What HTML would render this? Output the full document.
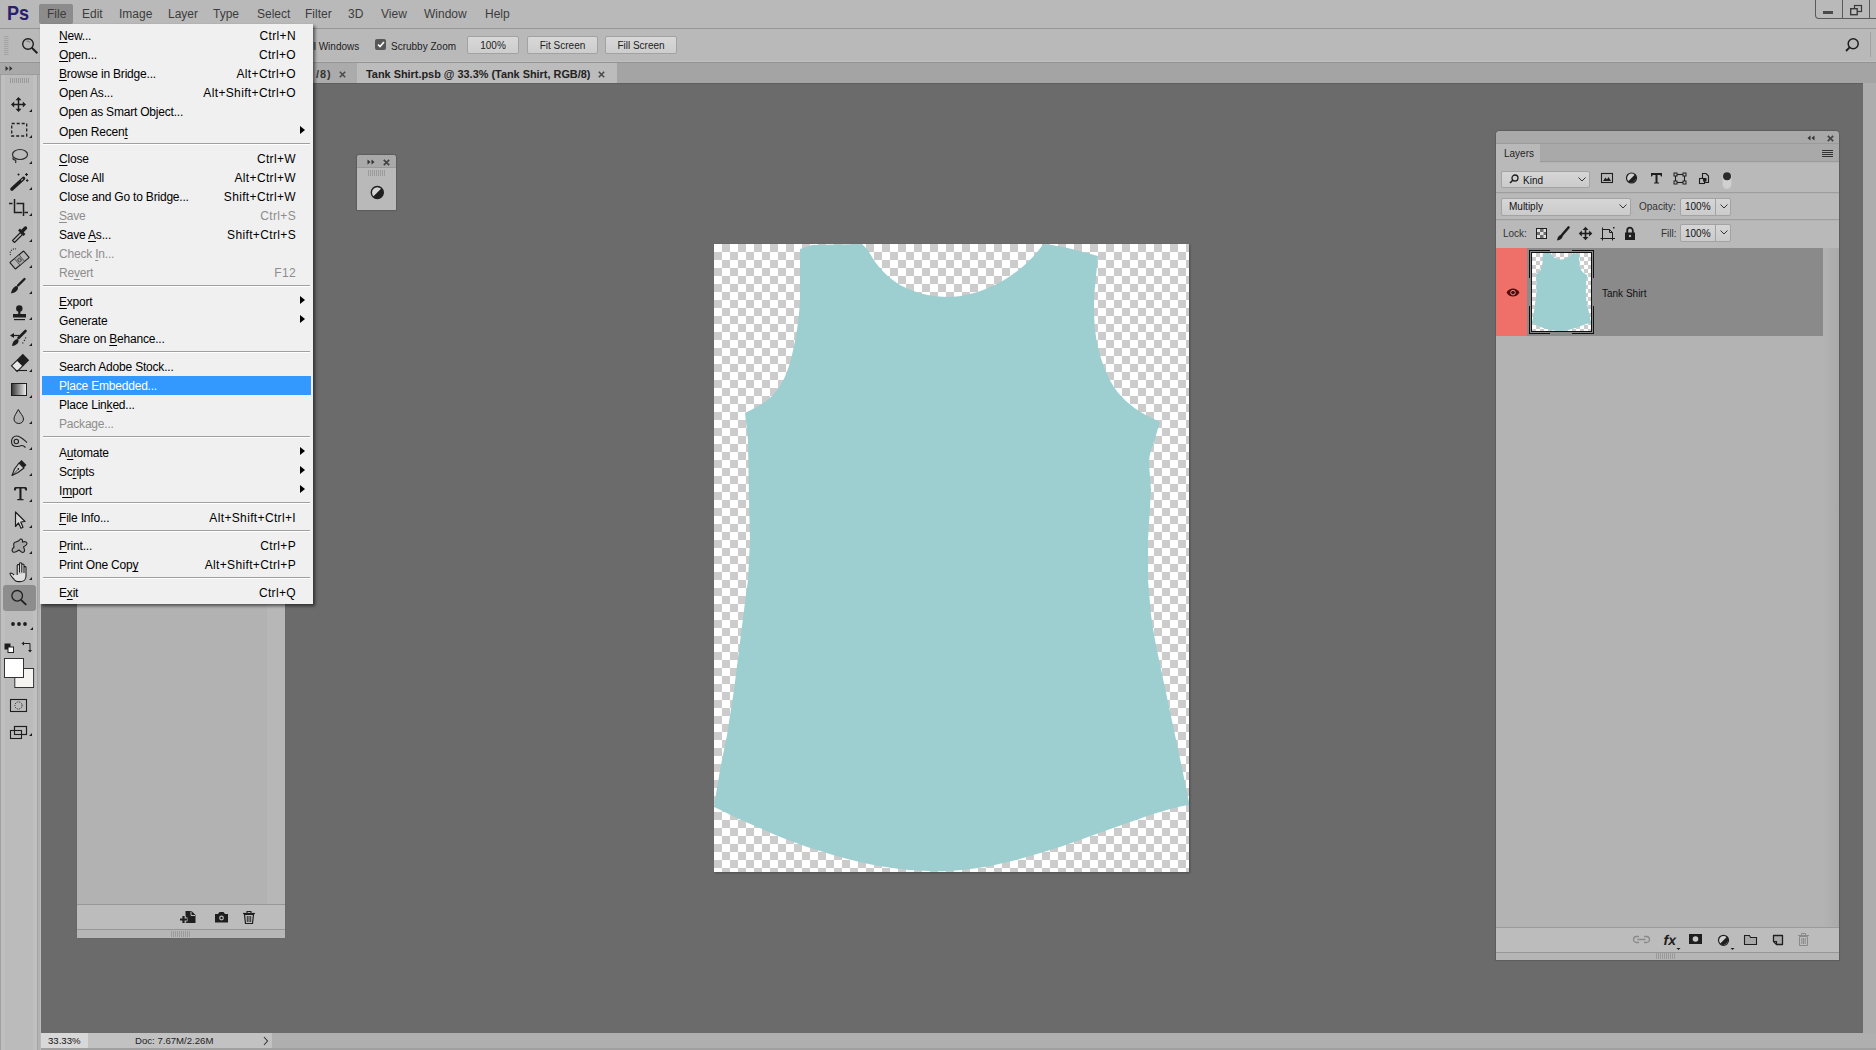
<!DOCTYPE html>
<html><head><meta charset="utf-8">
<style>
*{box-sizing:border-box;margin:0;padding:0}
html,body{width:1876px;height:1050px;overflow:hidden}
body{position:relative;background:#6b6b6b;font-family:"Liberation Sans",sans-serif;color:#1e1e1e}
.a{position:absolute}
.t{position:absolute;white-space:pre;line-height:1}
svg{position:absolute;overflow:visible}
/* menu bar */
#menubar{left:0;top:0;width:1876px;height:29px;background:#b9b9b9;border-bottom:1px solid #969696}
#menubar .m{position:absolute;top:7px;font-size:12px;color:#3c3c3c;white-space:pre;line-height:14px}
#options{left:0;top:29px;width:1876px;height:33px;background:#b9b9b9;border-bottom:1px solid #bfbfbf}
#tabs{left:40px;top:62px;width:1836px;height:21px;background:#a4a4a4;border-top:1px solid #949494}
#toolbar{left:0;top:62px;width:41px;height:988px;background:#bbbbbb}
#rstrip{left:1863px;top:83px;width:13px;height:950px;background:#adadad}
#status{left:41px;top:1033px;width:1836px;height:17px;background:#afafaf}
.btn{position:absolute;height:18px;background:linear-gradient(#d8d8d8,#cdcdcd);border:1px solid #a2a2a2;border-radius:2px;font-size:10px;color:#222;text-align:center;line-height:17px}
/* document */
#doc{left:714px;top:244px;width:475px;height:628px;
 background:conic-gradient(#cccccc 90deg,#ffffff 90deg 180deg,#cccccc 180deg 270deg,#ffffff 270deg) 0 0/16px 16px;
 box-shadow:1px 1px 2px rgba(0,0,0,0.3)}
/* file menu */
#fmenu{left:40px;top:24px;width:273px;height:580px;background:#f0f0f0;box-shadow:2px 2px 3px rgba(0,0,0,0.55)}
#fmenu .it{position:absolute;left:2px;width:269px;height:19px;font-size:12px;line-height:21px;color:#000}
#fmenu .it .l{position:absolute;left:17px;top:0;white-space:pre;letter-spacing:-0.2px}
#fmenu .it .r{position:absolute;right:15px;top:0;white-space:pre;letter-spacing:0.35px}
#fmenu .dis{color:#8d8d8d}
#fmenu .hl{background:#3399ff;color:#fff}
#fmenu .sep{position:absolute;left:3px;width:267px;height:2px;border-top:1px solid #a0a0a0;border-bottom:1px solid #fff}
#fmenu .sub{position:absolute;left:258px;top:5px;width:0;height:0;border-top:4px solid transparent;border-bottom:4px solid transparent;border-left:5px solid #000}
#fmenu u{text-decoration:underline;text-underline-offset:2px;text-decoration-thickness:1px}

#cantop{left:41px;top:83px;width:1822px;height:1px;background:#5f5f5f}

</style></head><body>
<div id="menubar" class="a">
  <div class="t" style="left:7px;top:2px;font-size:21px;font-weight:bold;color:#28206e;letter-spacing:0px;transform:scaleX(0.86);transform-origin:0 0">Ps</div>
  <div class="a" style="left:39px;top:4px;width:34px;height:20px;background:#8c8c8c;border-radius:2px"></div>
  <div class="m" style="left:47px">File</div>
  <div class="m" style="left:82px">Edit</div>
  <div class="m" style="left:119px">Image</div>
  <div class="m" style="left:168px">Layer</div>
  <div class="m" style="left:213px">Type</div>
  <div class="m" style="left:257px">Select</div>
  <div class="m" style="left:305px">Filter</div>
  <div class="m" style="left:348px">3D</div>
  <div class="m" style="left:381px">View</div>
  <div class="m" style="left:424px">Window</div>
  <div class="m" style="left:485px">Help</div>
  <!-- window controls -->
  <div class="a" style="left:1815px;top:-1px;width:62px;height:20px;border:1px solid #5a5a5a;border-top:none;border-radius:0 0 0 4px"></div>
  <div class="a" style="left:1842px;top:0;width:1px;height:18px;background:#5a5a5a"></div>
  <div class="a" style="left:1869px;top:0;width:1px;height:18px;background:#5a5a5a"></div>
  <div class="a" style="left:1823px;top:11px;width:10px;height:3px;background:#4a4a4a"></div>
  <svg style="left:1850px;top:5px" width="13" height="11"><rect x="4.5" y="0.5" width="7" height="6" fill="none" stroke="#3a3a3a" stroke-width="1.2"/><rect x="0.7" y="3.7" width="6.5" height="6" fill="#bdbdbd" stroke="#3a3a3a" stroke-width="1.4"/></svg>
</div>
<div id="options" class="a">
  <svg style="left:4px;top:7px" width="5" height="20"><g stroke="#a2a2a2" stroke-width="1"><path d="M0 0.5H4.5M0 2.5H4.5M0 4.5H4.5M0 6.5H4.5M0 8.5H4.5M0 10.5H4.5M0 12.5H4.5M0 14.5H4.5M0 16.5H4.5M0 18.5H4.5"/></g></svg>
  <svg style="left:21px;top:8px" width="18" height="18"><circle cx="7" cy="7" r="5.3" fill="none" stroke="#1e1e1e" stroke-width="1.4"/><path d="M10.8 10.8L16.3 16.2" stroke="#1e1e1e" stroke-width="2"/><path d="M5.5 4.2 A3.5 3.5 0 0 1 9 5.5" fill="none" stroke="#555" stroke-width="0.8"/></svg>
  <div class="t" style="left:277px;top:12.5px;font-size:10px;color:#222">Zoom All Windows</div>
  <div class="a" style="left:375px;top:10px;width:11px;height:11px;background:#575757;border-radius:2px"></div>
  <svg style="left:377px;top:12px" width="8" height="7"><path d="M1 3.5L3 5.5L7 1" fill="none" stroke="#fff" stroke-width="1.6"/></svg>
  <div class="t" style="left:391px;top:12.5px;font-size:10px;color:#222">Scrubby Zoom</div>
  <div class="btn" style="left:467px;top:7px;width:52px">100%</div>
  <div class="btn" style="left:527px;top:7px;width:71px">Fit Screen</div>
  <div class="btn" style="left:605px;top:7px;width:72px">Fill Screen</div>
  <svg style="left:1845px;top:9px" width="16" height="16"><circle cx="8.2" cy="5.8" r="5" fill="none" stroke="#1e1e1e" stroke-width="1.5"/><path d="M4.6 9.4L1 13" stroke="#1e1e1e" stroke-width="1.8"/></svg>
  <div class="a" style="left:1870px;top:3px;width:1px;height:25px;background:#a0a0a0"></div>
</div>
<div id="tabs" class="a">
  <div class="a" style="left:0;top:0;width:317px;height:20px;background:#ababab"></div>
  <div class="t" style="left:276px;top:6px;font-size:10.9px;font-weight:bold;color:#333;letter-spacing:1px">/8)</div>
  <svg style="left:299px;top:8px" width="7" height="7"><path d="M0.8 0.8L6.2 6.2M6.2 0.8L0.8 6.2" stroke="#4a4a4a" stroke-width="1.6"/></svg>
  <div class="a" style="left:317px;top:0;width:260px;height:20px;background:#bcbcbc"></div>
  <div class="t" style="left:326px;top:6px;font-size:10.9px;font-weight:bold;color:#222">Tank Shirt.psb @ 33.3% (Tank Shirt, RGB/8)</div>
  <svg style="left:558px;top:8px" width="7" height="7"><path d="M0.8 0.8L6.2 6.2M6.2 0.8L0.8 6.2" stroke="#4a4a4a" stroke-width="1.6"/></svg>
</div>
<div id="rstrip" class="a"></div>
<div id="cantop" class="a"></div>
<div id="status" class="a">
  <div class="a" style="left:0;top:0;width:47px;height:15px;background:#d8d8d8"></div>
  <div class="t" style="left:7px;top:3px;font-size:9.6px;color:#111">33.33%</div>
  <div class="a" style="left:47px;top:0;width:184px;height:15px;background:#c2c2c2"></div>
  <div class="t" style="left:94px;top:3px;font-size:9.6px;color:#222">Doc: 7.67M/2.26M</div>
  <svg style="left:222px;top:3px" width="6" height="10"><path d="M1 1L4.5 5L1 9" fill="none" stroke="#333" stroke-width="1.1"/></svg>
  <div class="a" style="left:0;top:15px;width:1836px;height:2px;background:#a0a0a0"></div>
</div>

<div id="toolbar" class="a">
  <div class="a" style="left:0;top:0;width:1px;height:988px;background:#a0a0a0"></div>
  <div class="a" style="left:1px;top:0;width:4px;height:988px;background:#bfbfbf"></div>
  <div class="a" style="left:33px;top:0;width:4px;height:988px;background:#c0c0c0"></div>
  <div class="a" style="left:37px;top:0;width:1px;height:988px;background:#a4a4a4"></div>
  <div class="a" style="left:38px;top:0;width:2px;height:988px;background:#b1b1b1"></div>
  <div class="a" style="left:0;top:0;width:41px;height:13px;background:#a9a9a9;border-top:1px solid #949494;border-bottom:1px solid #9c9c9c"></div>
  <svg style="left:5px;top:4px" width="9" height="5"><path d="M0.5 0L3.5 2.5L0.5 5ZM4.5 0L7.5 2.5L4.5 5Z" fill="#333"/></svg>
  <svg style="left:10px;top:16px" width="20" height="5"><path d="M0.5 0V5M2.5 0V5M4.5 0V5M6.5 0V5M8.5 0V5M10.5 0V5M12.5 0V5M14.5 0V5M16.5 0V5M18.5 0V5" stroke="#9a9a9a" stroke-width="1"/></svg>
  <svg style="left:0;top:0" width="40" height="988"><g fill="#1e1e1e" stroke="none">
  <!-- corner triangles (offset -62) -->
  <path d="M29 50L32 47L32 50Z M29 76L32 73L32 76Z M29 102L32 99L32 102Z M29 128L32 125L32 128Z M29 154L32 151L32 154Z M29 180L32 177L32 180Z M29 206L32 203L32 206Z M29 232L32 229L32 232Z M29 258L32 255L32 258Z M29 284L32 281L32 284Z M29 310L32 307L32 310Z M29 336L32 333L32 336Z M29 362L32 359L32 362Z M29 388L32 385L32 388Z M29 414L32 411L32 414Z M29 440L32 437L32 440Z M29 466L32 463L32 466Z M29 492L32 489L32 492Z M29 518L32 515L32 518Z M30 568L33 565L33 568Z M29 674L32 671L32 674Z"/>
  </g>
  <!-- move y=104.5 -> 42.5 -->
  <g transform="translate(18.5,42.5)" fill="#1e1e1e"><path d="M-0.75 -5.5H0.75V5.5H-0.75Z"/><path d="M-5.5 -0.75H5.5V0.75H-5.5Z"/><path d="M0 -7.5L-3 -4.3H3Z"/><path d="M0 7.5L-3 4.3H3Z"/><path d="M-7.5 0L-4.3 -3V3Z"/><path d="M7.5 0L4.3 -3V3Z"/></g>
  <!-- marquee -->
  <rect x="11.7" y="61.5" width="15" height="12.5" fill="none" stroke="#1e1e1e" stroke-width="1.3" stroke-dasharray="3 2"/>
  <!-- lasso -->
  <g transform="translate(20,93)"><ellipse cx="0" cy="-0.5" rx="7.5" ry="5" fill="none" stroke="#2a2a2a" stroke-width="1.2"/><path d="M-6.5 2.5C-8 4 -6 5 -4.5 5C-4 6 -4 7 -4.5 8" fill="none" stroke="#2a2a2a" stroke-width="1.2"/></g>
  <!-- magic wand -->
  <g><path d="M12 127L23.5 116.5" stroke="#1e1e1e" stroke-width="3.6" stroke-linecap="round"/><path d="M21 118.5L23 116.8" stroke="#d0d0d0" stroke-width="1"/>
  <path d="M17.5 112.5h2M18.5 111.5v2M25 112.5h3M26.5 111v3M26 118.5h2.4M27.2 117.3v2.4" stroke="#1e1e1e" stroke-width="1.1"/></g>
  <!-- crop -->
  <path d="M9 141.5H12.5M14.5 137V150.5H22M16.5 141.5H23.5V154M24.5 150.5H28" fill="none" stroke="#1e1e1e" stroke-width="1.5"/>
  <!-- eyedropper -->
  <g><path d="M12.5 178.5L20.5 170.5L22.5 172.5L14.5 180.5Z" fill="none" stroke="#1e1e1e" stroke-width="1.1" stroke-linejoin="round"/><path d="M19 167.5L24.5 173" stroke="#1e1e1e" stroke-width="2.6"/><path d="M22 169.5L25.5 166" stroke="#1e1e1e" stroke-width="3.4" stroke-linecap="round"/></g>
  <!-- healing -->
  <g transform="translate(19.5,198) rotate(-40)"><rect x="-9" y="-4.3" width="18" height="8.6" rx="0.5" fill="#b4b4b4" stroke="#1e1e1e" stroke-width="1.1"/><rect x="-3" y="-4.3" width="6" height="8.6" fill="#a0a0a0" stroke="#333" stroke-width="0.6"/><circle cx="0" cy="0" r="1.7" fill="none" stroke="#333" stroke-width="0.8"/></g>
  <path d="M10.5 193A4.5 4.5 0 0 1 16 187" fill="none" stroke="#1e1e1e" stroke-width="1.1" stroke-dasharray="1 1.3"/>
  <!-- brush -->
  <g><path d="M18 223.5L24.5 217" stroke="#1e1e1e" stroke-width="2.4" stroke-linecap="round"/><path d="M11 231.5C11.5 228 13.5 224.5 16.5 224C18.5 224.5 18.5 227 16.5 229C15 230.5 13 231 11 231.5Z" fill="#1e1e1e"/></g>
  <!-- stamp -->
  <g transform="translate(0,3)">  <g fill="#1e1e1e"><circle cx="19.3" cy="243.5" r="3.2"/><rect x="18.2" y="245" width="2.2" height="4"/><path d="M13 249H26V252.5H13Z"/><rect x="14" y="254" width="11" height="1.2"/></g>
    </g>
<!-- history brush -->
  <g><path d="M18.5 276L25.5 269" stroke="#1e1e1e" stroke-width="2.6" stroke-linecap="round"/><path d="M12 284C12.3 280.5 14.5 277.3 17.3 277C19 277.5 19 280 17 282C15.5 283.3 13.8 283.8 12 284Z" fill="#1e1e1e"/><path d="M10 273.5L14 271L14 276Z" fill="#1e1e1e"/><path d="M13.5 273.5H19.5" stroke="#1e1e1e" stroke-width="1.2"/><path d="M22.5 280.5l0.8 0.8M24 278l0.8 0.8M25.3 275.5l0.8 0.8" stroke="#1e1e1e" stroke-width="1.1"/></g>
  <!-- eraser -->
  <g transform="translate(20,301) rotate(-45)"><rect x="-8" y="-4" width="8" height="8" fill="#e8e8e8" stroke="#1e1e1e" stroke-width="1.1"/><rect x="0" y="-4.5" width="8.5" height="9" fill="#1e1e1e"/></g>
  <path d="M15.5 308.5H27" stroke="#1e1e1e" stroke-width="1.1"/>
  <!-- gradient -->
  <defs><linearGradient id="gr" x1="0" x2="1"><stop offset="0" stop-color="#333"/><stop offset="1" stop-color="#f4f4f4"/></linearGradient></defs>
  <rect x="11.5" y="321.5" width="15" height="12" fill="url(#gr)" stroke="#1e1e1e" stroke-width="1"/>
  <!-- blur drop -->
  <path d="M18.3 347.5C20 351 23.5 354 23.5 357C23.5 359.8 21.3 361.5 18.8 361.5C16.3 361.5 14 359.8 14 357C14 354 16.5 351 18.3 347.5Z" fill="#b0b0b0" stroke="#1e1e1e" stroke-width="1"/>
  <!-- dodge -->
  <g fill="none" stroke="#1e1e1e" stroke-width="1.1"><path d="M27 380.5C24 378 20.5 374 16.5 374C13.5 374 11.5 376.5 11.5 379.5C11.5 382.8 14 384.5 17 384.5C19 384.5 20.5 383.5 22 383.5C23.5 383.5 24.5 384.5 25.5 385.5"/><circle cx="16.3" cy="379.5" r="2.2"/></g>
  <!-- pen -->
  <g transform="translate(0,11)">  <g><path d="M12 402.5L14.5 396L19 390L24 395L18 399.5Z" fill="#c8c8c8" stroke="#1e1e1e" stroke-width="1.1" stroke-linejoin="round"/><path d="M19 389.5L21.5 387L26.5 392L24 394.5Z" fill="#1e1e1e"/><circle cx="18.3" cy="396" r="0.9" fill="#1e1e1e"/><path d="M12.5 402L17.5 397" stroke="#1e1e1e" stroke-width="0.8"/></g>
    </g>
<!-- type T -->
  <g transform="translate(0,1.5)">  <g fill="#1e1e1e"><path d="M14 425.5C14 424.5 14.5 423.5 15.5 423.5H25.5C26.5 423.5 27 424.5 27 425.5V427H25.5L24.5 425H21.5V435.5H23.5V436.8H17.3V435.5H19.4V425H16.5L15.5 427H14Z"/></g>
    </g>
<!-- path select -->
  <g transform="translate(0,3.5)">  <path d="M15.5 446.5V461L18.5 457.5L21 462.8L23 461.8L20.8 456.5L25 456Z" fill="#d8d8d8" stroke="#1e1e1e" stroke-width="1.2" stroke-linejoin="round"/>
    </g>
<!-- custom shape -->
  <g transform="translate(0,3.5)">  <path d="M19.5 474.5C21 472.5 23 474 22.5 476.5C24 476 27 475.8 27 478C27 480 24.5 480.5 23.5 481.5C24.5 483.5 25.5 486.5 23 487C21 487.3 20 485 19 484.5C17.5 485.5 15.5 487.5 13 486.5C11 485 12.5 483 14 481.5C13.5 479.5 13.3 477 15.5 476.5C17 476 18.5 476 19.5 474.5Z" fill="#a8a8a8" stroke="#1e1e1e" stroke-width="1.1"/>
    </g>
<!-- hand -->
  <path d="M14 513C12.5 511.5 10.5 510.5 10 511.5C9.5 512.5 12.5 515.5 14.5 518C16.5 520.5 18.5 519.5 21 519.5C24 519.5 26 517 26 514V505.5C26 504.3 24.2 504.3 24 505.5V511M24 511V503C24 501.7 22 501.7 21.8 503V510.5M21.8 510.5V501.7C21.8 500.4 19.6 500.4 19.5 501.7V510.5M19.5 510.5V503.5C19.5 502.2 17.3 502.2 17.2 503.5V513" fill="#e0e0e0" stroke="#1e1e1e" stroke-width="1.1" stroke-linejoin="round"/>
  </svg>
  <!-- zoom selected -->
  <div class="a" style="left:3px;top:523px;width:33px;height:26px;background:#8d8d8d;border-radius:3px"></div>
  <svg style="left:0;top:0" width="40" height="988">
  <circle cx="17.2" cy="533.8" r="5.3" fill="none" stroke="#1e1e1e" stroke-width="1.3"/><path d="M21 537.8L26.3 542.8" stroke="#1e1e1e" stroke-width="1.8"/>
  <g fill="#1e1e1e"><circle cx="13" cy="562" r="1.9"/><circle cx="19" cy="562" r="1.9"/><circle cx="25" cy="562" r="1.9"/></g>
  <!-- default colors -->
  <rect x="4.5" y="581.5" width="6" height="6" fill="#1e1e1e"/><rect x="8" y="585" width="5.5" height="5.5" fill="#fff" stroke="#1e1e1e" stroke-width="1"/>
  <path d="M23.5 583V581.5H30V588" fill="none" stroke="#1e1e1e" stroke-width="1"/><path d="M21.5 581.5L24 579.5V583.5Z M30 590.5L28 588H32Z" fill="#1e1e1e"/>
  <!-- color swatches -->
  <rect x="14.8" y="606.5" width="18.8" height="19" fill="#f5f4f0" stroke="#333" stroke-width="1"/>
  <rect x="4.5" y="596.5" width="19" height="19" fill="#ffffff" stroke="#333" stroke-width="1"/>
  <!-- quick mask -->
  <rect x="10.5" y="637.5" width="16" height="12" fill="none" stroke="#1e1e1e" stroke-width="1.1"/><circle cx="18.5" cy="643.5" r="3.6" fill="none" stroke="#1e1e1e" stroke-width="1" stroke-dasharray="1 1.1"/>
  <!-- screen mode -->
  <rect x="14.5" y="664.5" width="12" height="8" fill="#bbbbbb" stroke="#1e1e1e" stroke-width="1.1"/><rect x="10.5" y="668.5" width="11" height="8" fill="#bbbbbb" stroke="#1e1e1e" stroke-width="1.1"/><rect x="14.5" y="664.5" width="12" height="8" fill="none" stroke="#1e1e1e" stroke-width="1.1"/>
  </svg>
</div>

<div id="doc" class="a"></div>
<svg style="left:0;top:0" width="1876" height="1050" viewBox="0 0 1876 1050">
<path fill="#9ecfd0" d="M800,249 L812,245 L862,244 L868,250 C874,262 884,275 900,285 C915,293 930,297 950,297 C975,296 1000,285 1020,269 C1030,261 1038,252 1043,244 L1052,245 L1068,248 L1098,256 L1095,287 C1093,305 1094,330 1098,347 C1102,365 1110,385 1122,397 C1132,408 1145,415 1160,422 L1153,445 C1150,452 1149,458 1149,464 L1151,490 L1148,540 L1148,580 L1151,615 C1153,630 1156,645 1158,655 L1175,735 L1182,768 L1189,802 L1189,805 C1170,808 1150,815 1119,826 C1090,836 1060,848 1030,856 C1000,865 975,869 950,871 C920,872 890,869 860,862 C820,852 790,842 760,828 C740,820 725,812 714,807 L714,806 L720,770 L727,735 L734,690 L739,650 L744,610 L748,580 L750,540 L749,500 L748,440 L745,413 C755,408 765,403 772,396 C782,386 788,372 792,355 C796,338 799,320 800,300 Z"/>
</svg>

<!-- hidden panel behind file menu -->
<div class="a" style="left:77px;top:120px;width:208px;height:818px;background:#b2b2b2;box-shadow:0 0 1px #5a5a5a">
  <div class="a" style="left:190px;top:0;width:18px;height:784px;background:#b7b7b7"></div>
  <div class="a" style="left:0;top:784px;width:208px;height:1px;background:#979797"></div>
  <div class="a" style="left:0;top:785px;width:208px;height:24px;background:#bcbcbc"></div>
  <div class="a" style="left:0;top:809px;width:208px;height:1px;background:#969696"></div>
  <div class="a" style="left:0;top:810px;width:208px;height:8px;background:#b6b6b6"></div>
  <svg style="left:94px;top:811px" width="20" height="6"><path d="M0.5 0V6M2.5 0V6M4.5 0V6M6.5 0V6M8.5 0V6M10.5 0V6M12.5 0V6M14.5 0V6M16.5 0V6M18.5 0V6" stroke="#9a9a9a" stroke-width="1"/></svg>
  <svg style="left:0;top:780px" width="208" height="30"><g fill="#1e1e1e">
    <path d="M108.5 11H114.5L118.5 15V23H108.5Z"/><path d="M114 11.5V15.5H118" fill="none" stroke="#bcbcbc" stroke-width="1"/>
    <path d="M102.5 19.5H110.5M106.5 15.5V23.5" stroke="#bcbcbc" stroke-width="4.2"/>
    <path d="M103 19.5H110M106.5 16V23" stroke="#1e1e1e" stroke-width="2.2"/>
    <path d="M138 14H141L142.5 12H146.5L148 14H151V22.5H138Z"/><circle cx="144.5" cy="18" r="2.4" fill="#bcbcbc"/><circle cx="144.5" cy="18" r="1.2" fill="#1e1e1e"/>
    <path d="M166 13.5H178" stroke="#1e1e1e" stroke-width="1.2"/><path d="M170 13.5V11.5H174V13.5" fill="none" stroke="#1e1e1e" stroke-width="1.1"/>
    <path d="M167.5 14.5H176.5L175.5 23.5H168.5Z" fill="none" stroke="#1e1e1e" stroke-width="1.2"/>
    <path d="M170.3 16V22M172 16V22M173.7 16V22" stroke="#1e1e1e" stroke-width="0.9"/>
  </g></svg>
</div>
<!-- small floating panel -->
<div class="a" style="left:357px;top:155px;width:39px;height:55px;background:#b9b9b9;border-radius:3px 3px 0 0;box-shadow:0 0 1px 1px #5d5d5d">
  <div class="a" style="left:0;top:0;width:39px;height:13px;background:#a9a9a9;border-radius:3px 3px 0 0;border-bottom:1px solid #9a9a9a"></div>
  <svg style="left:10px;top:4px" width="9" height="6"><path d="M0.5 0.5L3.5 3L0.5 5.5ZM4.5 0.5L7.5 3L4.5 5.5Z" fill="#333"/></svg>
  <svg style="left:26px;top:3.5px" width="7" height="7"><path d="M0.8 0.8L6.2 6.2M6.2 0.8L0.8 6.2" stroke="#444" stroke-width="1.7"/></svg>
  <svg style="left:10px;top:15px" width="20" height="6"><path d="M1.5 0V6M3.5 0V6M5.5 0V6M7.5 0V6M9.5 0V6M11.5 0V6M13.5 0V6M15.5 0V6M17.5 0V6" stroke="#9a9a9a" stroke-width="1"/></svg>
  <svg style="left:12px;top:30px" width="15" height="15"><circle cx="8.3" cy="7.5" r="6" fill="#d4d4d4" stroke="#1e1e1e" stroke-width="1.4"/><path d="M12.5 3.3A6 6 0 0 1 4 11.8Z" fill="#1e1e1e"/></svg>
</div>

<div class="a" style="left:1496px;top:131px;width:343px;height:829px;background:#b3b3b3;border-radius:4px 4px 0 0;box-shadow:0 0 1px 1px #5d5d5d">
  <!-- header -->
  <div class="a" style="left:0;top:0;width:343px;height:13px;background:#a9a9a9;border-radius:4px 4px 0 0;border-bottom:1px solid #9b9b9b"></div>
  <svg style="left:311px;top:4px" width="9" height="6"><path d="M3.5 0.5L0.5 3L3.5 5.5ZM7.5 0.5L4.5 3L7.5 5.5Z" fill="#333"/></svg>
  <svg style="left:331px;top:4px" width="7" height="7"><path d="M0.8 0.8L6.2 6.2M6.2 0.8L0.8 6.2" stroke="#444" stroke-width="1.7"/></svg>
  <!-- tab row -->
  <div class="a" style="left:0;top:13px;width:343px;height:18px;background:#a9a9a9;border-bottom:1px solid #9b9b9b"></div>
  <div class="a" style="left:0;top:13px;width:44px;height:19px;background:#b9b9b9"></div>
  <div class="t" style="left:8px;top:18px;font-size:10px;color:#1e1e1e">Layers</div>
  <svg style="left:326px;top:19px" width="11" height="8"><path d="M0 0.5H11M0 2.5H11M0 4.5H11M0 6.5H11" stroke="#333" stroke-width="1"/></svg>
  <!-- toolbar rows bg -->
  <div class="a" style="left:0;top:32px;width:343px;height:30px;background:#b9b9b9;border-bottom:1px solid #9e9e9e"></div>
  <div class="a" style="left:0;top:63px;width:343px;height:26px;background:#b9b9b9;border-bottom:1px solid #9e9e9e"></div>
  <div class="a" style="left:0;top:90px;width:343px;height:27px;background:#b9b9b9"></div>
  <!-- kind -->
  <div class="a" style="left:5px;top:40px;width:89px;height:17px;background:linear-gradient(#d6d6d6,#cbcbcb);border:1px solid #a3a3a3;border-radius:2px"></div>
  <svg style="left:13px;top:43px" width="10" height="10"><circle cx="6" cy="4" r="3" fill="none" stroke="#1e1e1e" stroke-width="1.3"/><path d="M3.8 6.2L1 9" stroke="#1e1e1e" stroke-width="1.6"/></svg>
  <div class="t" style="left:27px;top:45px;font-size:10px;color:#111">Kind</div>
  <svg style="left:82px;top:46px" width="8" height="5"><path d="M0.5 0.5L4 4L7.5 0.5" fill="none" stroke="#333" stroke-width="1"/></svg>
  <svg style="left:0;top:32px" width="343" height="30"><g fill="none" stroke="#1e1e1e">
    <rect x="105.5" y="10.5" width="11" height="9" stroke-width="1.1"/><path d="M107 18L109.5 14.5L111 16.5L112.5 14L115 18Z" fill="#1e1e1e" stroke="none"/>
    <circle cx="135.5" cy="15" r="5" stroke-width="1.2" fill="#d0d0d0"/><path d="M139 11.5A5 5 0 0 1 132 18.5Z" fill="#1e1e1e" stroke="none"/>
  </g>
    <path d="M155 10H166V13.5H165L164.2 12H161.5V19.5H163V20.5H158V19.5H159.5V12H156.8L156 13.5H155Z" fill="#1e1e1e"/>
    <rect x="179.5" y="11.5" width="9" height="8" fill="none" stroke="#1e1e1e" stroke-width="1.1"/>
    <g fill="#b9b9b9" stroke="#1e1e1e" stroke-width="1"><rect x="178" y="10" width="3" height="3"/><rect x="187" y="10" width="3" height="3"/><rect x="178" y="18" width="3" height="3"/><rect x="187" y="18" width="3" height="3"/></g>
    <path d="M206.5 10.5H210L212.5 13V19.5H206.5Z" fill="none" stroke="#1e1e1e" stroke-width="1.1"/><rect x="203.5" y="15.5" width="5" height="5" fill="#b9b9b9" stroke="#1e1e1e" stroke-width="1.1"/><rect x="207" y="15" width="3.5" height="3.5" fill="#1e1e1e"/>
    <rect x="226.5" y="9" width="9" height="17" rx="4.5" fill="#d0d0d0" stroke="#c0c0c0" stroke-width="0.8"/><circle cx="231" cy="13.3" r="4" fill="#2a2a2a"/>
  </svg>
  <!-- multiply / opacity -->
  <div class="a" style="left:5px;top:67px;width:130px;height:18px;background:linear-gradient(#d6d6d6,#cbcbcb);border:1px solid #a3a3a3;border-radius:2px"></div>
  <div class="t" style="left:13px;top:71px;font-size:10px;color:#111">Multiply</div>
  <svg style="left:123px;top:73px" width="8" height="5"><path d="M0.5 0.5L4 4L7.5 0.5" fill="none" stroke="#333" stroke-width="1"/></svg>
  <div class="t" style="left:143px;top:71px;font-size:10px;color:#333">Opacity:</div>
  <div class="a" style="left:184px;top:67px;width:51px;height:18px;background:linear-gradient(#d6d6d6,#cbcbcb);border:1px solid #a3a3a3;border-radius:2px"></div>
  <div class="a" style="left:219px;top:68px;width:1px;height:16px;background:#a3a3a3"></div>
  <div class="t" style="left:189px;top:71px;font-size:10px;color:#111">100%</div>
  <svg style="left:224px;top:73px" width="8" height="5"><path d="M0.5 0.5L4 4L7.5 0.5" fill="none" stroke="#333" stroke-width="1"/></svg>
  <!-- lock / fill -->
  <div class="t" style="left:7px;top:98px;font-size:10px;color:#333">Lock:</div>
  <svg style="left:0;top:90px" width="343" height="27">
    <rect x="40.5" y="7.5" width="10" height="10" fill="#e0e0e0" stroke="#1e1e1e" stroke-width="1"/>
    <path d="M44 8H47.5V11H44ZM41 11H44V14H41ZM47.5 11H50V14H47.5ZM44 14H47.5V17H44Z" fill="#707070"/>
    <path d="M66 14L72.5 6.5" stroke="#1e1e1e" stroke-width="2.6" stroke-linecap="round"/><path d="M61 19.5C61.3 16.5 63 14 65.5 13.8C67 14.3 67 16.3 65.3 17.8C64 18.8 62.5 19.3 61 19.5Z" fill="#1e1e1e"/>
    <g transform="translate(89.5,12.5)" fill="#1e1e1e"><path d="M-0.8 -4.5H0.8V4.5H-0.8Z"/><path d="M-4.5 -0.8H4.5V0.8H-4.5Z"/><path d="M0 -6.8L-3 -3.6H3Z"/><path d="M0 6.8L-3 3.6H3Z"/><path d="M-6.8 0L-3.6 -3V3Z"/><path d="M6.8 0L3.6 -3V3Z"/></g>
    <path d="M106.5 6.5V19.5M104.5 17.5H119M106.5 8.5H113.5L116.5 11.5V19.5" fill="none" stroke="#1e1e1e" stroke-width="1"/><path d="M113.5 8.5V11.5H116.5" fill="none" stroke="#1e1e1e" stroke-width="1"/><rect x="117" y="6" width="1.5" height="1.5" fill="#1e1e1e"/>
    <path d="M131.2 12V9.5A2.8 2.8 0 0 1 136.8 9.5V12" fill="none" stroke="#1e1e1e" stroke-width="1.8"/><rect x="129" y="11.5" width="10" height="7.5" fill="#1e1e1e"/><circle cx="134" cy="15" r="1.2" fill="#b9b9b9"/>
  </svg>
  <div class="t" style="left:165px;top:98px;font-size:10px;color:#333">Fill:</div>
  <div class="a" style="left:184px;top:93px;width:51px;height:18px;background:linear-gradient(#d6d6d6,#cbcbcb);border:1px solid #a3a3a3;border-radius:2px"></div>
  <div class="a" style="left:219px;top:94px;width:1px;height:16px;background:#a3a3a3"></div>
  <div class="t" style="left:189px;top:98px;font-size:10px;color:#111">100%</div>
  <svg style="left:224px;top:99px" width="8" height="5"><path d="M0.5 0.5L4 4L7.5 0.5" fill="none" stroke="#333" stroke-width="1"/></svg>
  <!-- layer row -->
  <div class="a" style="left:0;top:117px;width:327px;height:88px;background:#8a8a8a"></div>
  <div class="a" style="left:0;top:117px;width:31px;height:88px;background:#ef7068"></div>
  <svg style="left:9.5px;top:157px" width="14" height="9"><path d="M0.5 4.5C2.5 1.5 4.5 0.5 7 0.5C9.5 0.5 11.5 1.5 13.5 4.5C11.5 7.5 9.5 8.5 7 8.5C4.5 8.5 2.5 7.5 0.5 4.5Z" fill="#520a0a"/><circle cx="7" cy="4.6" r="2.3" fill="none" stroke="#e8a09a" stroke-width="0.9"/><circle cx="7" cy="4.6" r="1.2" fill="#520a0a"/></svg>
  <div class="t" style="left:106px;top:158px;font-size:10px;color:#111">Tank Shirt</div>
  <!-- scrollbar column -->
  <div class="a" style="left:327px;top:117px;width:16px;height:679px;background:linear-gradient(90deg,#b3b3b3,#aaaaaa)"></div>
  <!-- bottom bar -->
  <div class="a" style="left:0;top:796px;width:343px;height:1px;background:#9a9a9a"></div>
  <div class="a" style="left:0;top:797px;width:343px;height:24px;background:#bcbcbc"></div>
  <div class="a" style="left:0;top:821px;width:343px;height:1px;background:#979797"></div>
  <div class="a" style="left:0;top:822px;width:343px;height:7px;background:#b5b5b5"></div>
  <svg style="left:160px;top:822px" width="20" height="6"><path d="M0.5 0V6M2.5 0V6M4.5 0V6M6.5 0V6M8.5 0V6M10.5 0V6M12.5 0V6M14.5 0V6M16.5 0V6M18.5 0V6" stroke="#9a9a9a" stroke-width="1"/></svg>
  <svg style="left:0;top:797px" width="343" height="24">
    <g fill="none" stroke="#8a8a8a" stroke-width="1.3" transform="translate(0,2)"><path d="M143 6.5H140.5A3 3 0 0 0 140.5 12.5H143M148 6.5H150.5A3 3 0 0 1 150.5 12.5H148M141.5 9.5H149.5"/></g>
    <text x="167.5" y="17" font-family="Liberation Sans" font-style="italic" font-weight="bold" font-size="14" fill="#1e1e1e" style="text-rendering:geometricPrecision">fx</text>
    <path d="M180.5 20H184.5L182.5 22Z" fill="#1e1e1e"/>
    <rect x="193" y="6" width="13" height="10" fill="#1e1e1e"/><circle cx="199.5" cy="11" r="2.8" fill="#c8c8c8"/>
    <circle cx="227.5" cy="12.3" r="5" fill="#d0d0d0" stroke="#1e1e1e" stroke-width="1.2"/><path d="M231 8.8A5 5 0 0 1 224 15.8Z" fill="#1e1e1e"/>
    <path d="M234.5 20H238.5L236.5 22Z" fill="#1e1e1e"/>
    <path d="M248.5 8.5V16.5H260.5V9.5H254.5L253.5 7.5H248.5Z" fill="#a8a8a8" stroke="#1e1e1e" stroke-width="1.1"/>
    <path d="M277.5 7.5H286.5V16.5H280.5L277.5 13.5Z" fill="#a8a8a8" stroke="#1e1e1e" stroke-width="1.3" stroke-linejoin="round"/><path d="M277.5 13.5H280.5V16.5" fill="none" stroke="#1e1e1e" stroke-width="1.1"/>
    <g fill="none" stroke="#8a8a8a" stroke-width="1"><path d="M302 7.5H313M305.5 7.5V5.5H309.5V7.5M303.5 8.5H311.5V17.5H303.5Z M305.8 10V16M307.5 10V16M309.2 10V16"/></g>
  </svg>
</div>
<!-- thumbnail -->
<div class="a" style="left:1529px;top:250px;width:65px;height:84px;border:1px solid #111"></div>
<div class="a" style="left:1550px;top:250px;width:22px;height:1px;background:#8a8a8a"></div>
<div class="a" style="left:1550px;top:333px;width:22px;height:1px;background:#8a8a8a"></div>
<div class="a" style="left:1529px;top:278px;width:1px;height:28px;background:#8a8a8a"></div>
<div class="a" style="left:1593px;top:278px;width:1px;height:28px;background:#8a8a8a"></div>
<div class="a" style="left:1531px;top:252px;width:61px;height:80px;border:1px solid #111"></div>
<div class="a" style="left:1532px;top:253px;width:59px;height:78px;background:conic-gradient(#cccccc 90deg,#ffffff 90deg 180deg,#cccccc 180deg 270deg,#ffffff 270deg) 0 0/8px 8px;overflow:hidden">
<svg style="left:0;top:0" width="59" height="78" viewBox="714 244 475 627" preserveAspectRatio="none">
<path fill="#9ecfd0" d="M800,249 L812,245 L862,244 L868,250 C874,262 884,275 900,285 C915,293 930,297 950,297 C975,296 1000,285 1020,269 C1030,261 1038,252 1043,244 L1052,245 L1068,248 L1098,256 L1095,287 C1093,305 1094,330 1098,347 C1102,365 1110,385 1122,397 C1132,408 1145,415 1160,422 L1153,445 C1150,452 1149,458 1149,464 L1151,490 L1148,540 L1148,580 L1151,615 C1153,630 1156,645 1158,655 L1175,735 L1182,768 L1189,802 L1189,805 C1170,808 1150,815 1119,826 C1090,836 1060,848 1030,856 C1000,865 975,869 950,871 C920,872 890,869 860,862 C820,852 790,842 760,828 C740,820 725,812 714,807 L714,806 L720,770 L727,735 L734,690 L739,650 L744,610 L748,580 L750,540 L749,500 L748,440 L745,413 C755,408 765,403 772,396 C782,386 788,372 792,355 C796,338 799,320 800,300 Z"/>
</svg></div>

<div id="fmenu" class="a">
<div class="it" style="top:2px"><span class="l"><u>N</u>ew...</span><span class="r">Ctrl+N</span></div>
<div class="it" style="top:21px"><span class="l"><u>O</u>pen...</span><span class="r">Ctrl+O</span></div>
<div class="it" style="top:40px"><span class="l"><u>B</u>rowse in Bridge...</span><span class="r">Alt+Ctrl+O</span></div>
<div class="it" style="top:59px"><span class="l">Open As...</span><span class="r">Alt+Shift+Ctrl+O</span></div>
<div class="it" style="top:78px"><span class="l">Open as Smart Object...</span></div>
<div class="it" style="top:97px"><span class="l" style="top:1px">Open Recen<u>t</u></span><i class="sub"></i></div>
<div class="sep" style="top:119px"></div>
<div class="it" style="top:125px"><span class="l"><u>C</u>lose</span><span class="r">Ctrl+W</span></div>
<div class="it" style="top:144px"><span class="l">Close All</span><span class="r">Alt+Ctrl+W</span></div>
<div class="it" style="top:163px"><span class="l">Close and Go to Bridge...</span><span class="r">Shift+Ctrl+W</span></div>
<div class="it dis" style="top:182px"><span class="l"><u>S</u>ave</span><span class="r">Ctrl+S</span></div>
<div class="it" style="top:201px"><span class="l">Save <u>A</u>s...</span><span class="r">Shift+Ctrl+S</span></div>
<div class="it dis" style="top:220px"><span class="l">Check <u>I</u>n...</span></div>
<div class="it dis" style="top:239px"><span class="l">Re<u>v</u>ert</span><span class="r">F12</span></div>
<div class="sep" style="top:261px"></div>
<div class="it" style="top:267px"><span class="l" style="top:1px"><u>E</u>xport</span><i class="sub"></i></div>
<div class="it" style="top:286px"><span class="l" style="top:1px">Generate</span><i class="sub"></i></div>
<div class="it" style="top:305px"><span class="l">Share on <u>B</u>ehance...</span></div>
<div class="sep" style="top:327px"></div>
<div class="it" style="top:333px"><span class="l">Search Adobe Stock...</span></div>
<div class="it hl" style="top:352px"><span class="l">P<u>l</u>ace Embedded...</span></div>
<div class="it" style="top:371px"><span class="l">Place Lin<u>k</u>ed...</span></div>
<div class="it dis" style="top:390px"><span class="l">Package...</span></div>
<div class="sep" style="top:412px"></div>
<div class="it" style="top:418px"><span class="l" style="top:1px">A<u>u</u>tomate</span><i class="sub"></i></div>
<div class="it" style="top:437px"><span class="l" style="top:1px">Sc<u>r</u>ipts</span><i class="sub"></i></div>
<div class="it" style="top:456px"><span class="l" style="top:1px">I<u>m</u>port</span><i class="sub"></i></div>
<div class="sep" style="top:478px"></div>
<div class="it" style="top:484px"><span class="l"><u>F</u>ile Info...</span><span class="r">Alt+Shift+Ctrl+I</span></div>
<div class="sep" style="top:506px"></div>
<div class="it" style="top:512px"><span class="l"><u>P</u>rint...</span><span class="r">Ctrl+P</span></div>
<div class="it" style="top:531px"><span class="l">Print One Cop<u>y</u></span><span class="r">Alt+Shift+Ctrl+P</span></div>
<div class="sep" style="top:553px"></div>
<div class="it" style="top:559px"><span class="l">E<u>x</u>it</span><span class="r">Ctrl+Q</span></div>
</div>

</body></html>
